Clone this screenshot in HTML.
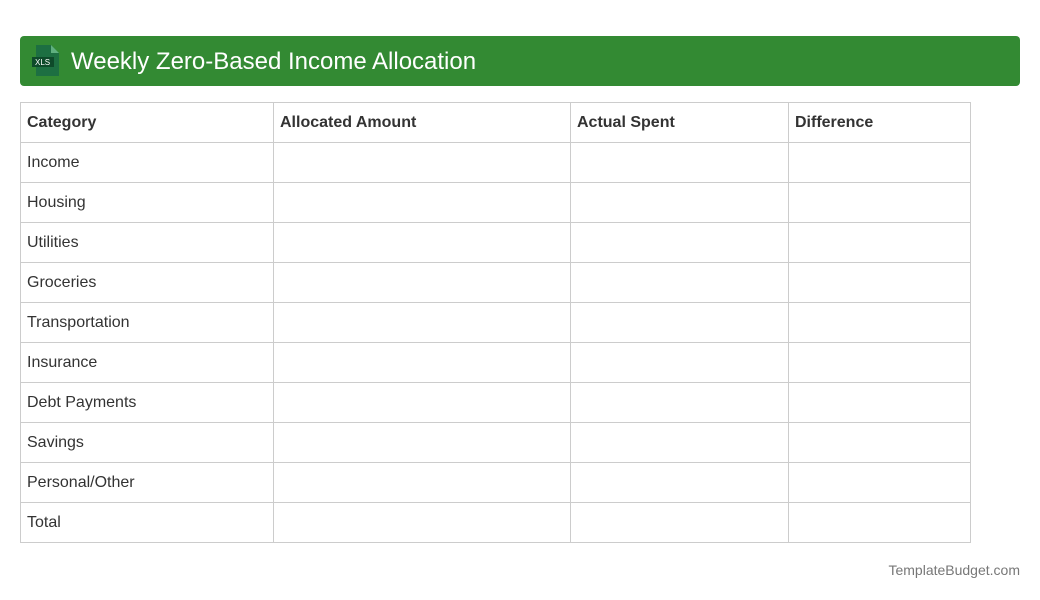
<!DOCTYPE html><html><head><style>
body{margin:0;width:1040px;height:600px;background:#fff;font-family:"Liberation Sans",sans-serif;position:relative}
.hdr{position:absolute;left:20px;top:36px;width:1000px;height:50px;background:#338a33;border-radius:4px}
.hdr span{position:absolute;left:51px;top:12px;color:#fff;font-size:24px}
table{position:absolute;left:20px;top:102px;border-collapse:collapse;font-size:16px;color:#333}
td{border:1px solid #ccc;height:40px;padding:0 0 0 6px;box-sizing:border-box}
tr:first-child td{font-weight:bold}
.f{position:absolute;right:20px;top:562px;font-size:14px;color:#777}
</style></head><body>
<div class="hdr"><svg style="position:absolute;left:10px;top:9px" width="32" height="32" viewBox="0 0 32 32"><path d="M6 0h15l8 8v23H6z" fill="#1d6f42"/><path d="M21 0v8h8z" fill="#5fb07f"/><rect x="2" y="12" width="22" height="10" fill="#0e4a2a"/><text x="5" y="20" font-size="8" fill="#fff" font-family="Liberation Sans">XLS</text></svg><span>Weekly Zero-Based Income Allocation</span></div>
<table>
<tr><td style="width:253px">Category</td><td style="width:297px">Allocated Amount</td><td style="width:218px">Actual Spent</td><td style="width:182px">Difference</td></tr>
<tr><td>Income</td><td></td><td></td><td></td></tr>
<tr><td>Housing</td><td></td><td></td><td></td></tr>
<tr><td>Utilities</td><td></td><td></td><td></td></tr>
<tr><td>Groceries</td><td></td><td></td><td></td></tr>
<tr><td>Transportation</td><td></td><td></td><td></td></tr>
<tr><td>Insurance</td><td></td><td></td><td></td></tr>
<tr><td>Debt Payments</td><td></td><td></td><td></td></tr>
<tr><td>Savings</td><td></td><td></td><td></td></tr>
<tr><td>Personal/Other</td><td></td><td></td><td></td></tr>
<tr><td>Total</td><td></td><td></td><td></td></tr>
</table>
<div class="f">TemplateBudget.com</div>
</body></html>
